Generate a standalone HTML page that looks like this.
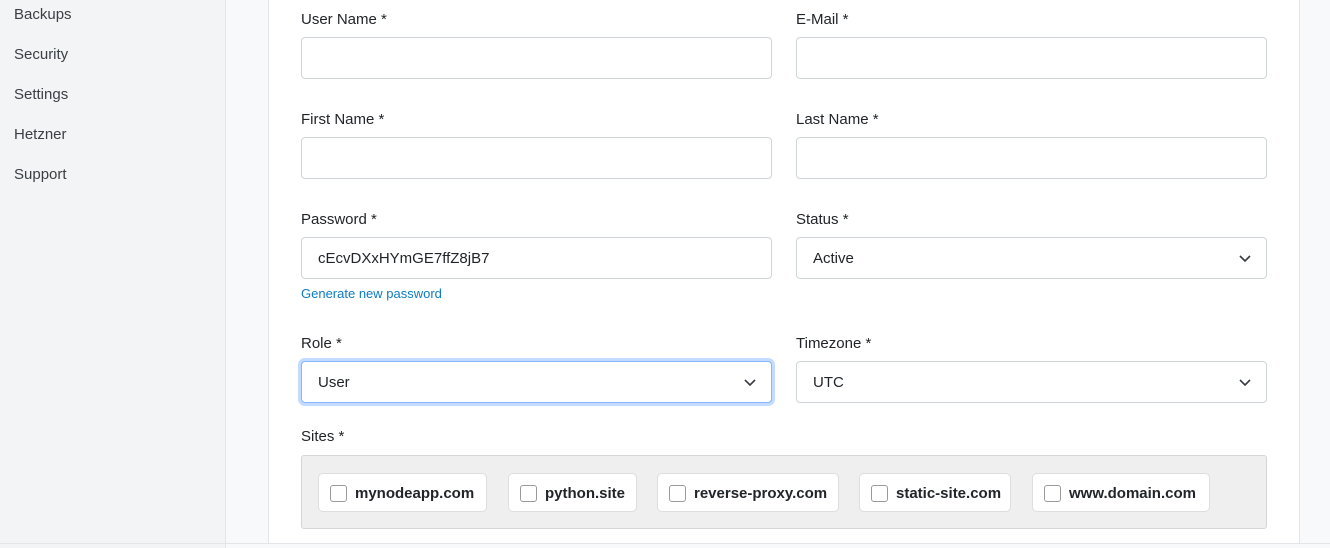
<!DOCTYPE html>
<html><head><style>
*{box-sizing:border-box;margin:0;padding:0}
body{width:1330px;height:548px;overflow:hidden;background:#f8f9fa;font-family:"Liberation Sans",sans-serif;color:#212529;position:relative}
.side{position:absolute;left:0;top:0;width:226px;height:548px;background:#f3f4f6;border-right:1px solid #e3e5e8}
.side div{position:absolute;left:14px;font-size:15px;color:#3a3f44}
.card{position:absolute;left:268px;top:-5px;width:1032px;height:549px;background:#fff;border:1px solid #e3e5e8;border-top:none}
.bl{position:absolute;left:0;top:543px;width:1330px;height:1px;background:#e3e5e8}
.lb{position:absolute;font-size:15px;color:#212529}
.in{position:absolute;width:471px;height:42px;border:1px solid #ced4da;border-radius:4px;background:#fff;font-size:15px;padding:12px 16px}
.chev{position:absolute;right:14px;top:13px}
.sites{position:absolute;left:301px;top:455px;width:966px;height:74px;background:#efefef;border:1px solid #d6d6d6;border-radius:3px}
.chip{position:absolute;top:17px;height:39px;background:#fff;border:1px solid #dedede;border-radius:5px;font-size:15px;font-weight:bold;padding:11px 0 0 36px;white-space:nowrap}
.chip:before{content:"";position:absolute;left:11px;top:11px;width:15px;height:15px;border:1px solid #9a9a9a;border-radius:3px}
</style></head><body>
<div class="side">
<div style="top:6px">Backups</div><div style="top:46px">Security</div><div style="top:86px">Settings</div><div style="top:126px">Hetzner</div><div style="top:166px">Support</div>
</div>
<div class="card"></div>
<div class="bl"></div>
<div class="lb" style="left:301px;top:11px">User Name *</div>
<div class="lb" style="left:796px;top:11px">E-Mail *</div>
<div class="in" style="left:301px;top:37px"></div>
<div class="in" style="left:796px;top:37px"></div>
<div class="lb" style="left:301px;top:111px">First Name *</div>
<div class="lb" style="left:796px;top:111px">Last Name *</div>
<div class="in" style="left:301px;top:137px"></div>
<div class="in" style="left:796px;top:137px"></div>
<div class="lb" style="left:301px;top:211px">Password *</div>
<div class="lb" style="left:796px;top:211px">Status *</div>
<div class="in" style="left:301px;top:237px">cEcvDXxHYmGE7ffZ8jB7</div>
<div class="in" style="left:796px;top:237px">Active<svg class="chev" width="14" height="14" viewBox="0 0 14 14"><path d="M2 5l5 5 5-5" fill="none" stroke="#343a40" stroke-width="1.6"/></svg></div>
<div class="lb" style="left:301px;top:286px;font-size:13px;color:#0d7cc1">Generate new password</div>
<div class="lb" style="left:301px;top:335px">Role *</div>
<div class="lb" style="left:796px;top:335px">Timezone *</div>
<div class="in" style="left:301px;top:361px;border-color:#86b7fe;box-shadow:0 0 0 3px rgba(13,110,253,.25)">User<svg class="chev" width="14" height="14" viewBox="0 0 14 14"><path d="M2 5l5 5 5-5" fill="none" stroke="#343a40" stroke-width="1.6"/></svg></div>
<div class="in" style="left:796px;top:361px">UTC<svg class="chev" width="14" height="14" viewBox="0 0 14 14"><path d="M2 5l5 5 5-5" fill="none" stroke="#343a40" stroke-width="1.6"/></svg></div>
<div class="lb" style="left:301px;top:428px">Sites *</div>
<div class="sites">
<div class="chip" style="left:16px;width:169px">mynodeapp.com</div>
<div class="chip" style="left:206px;width:129px">python.site</div>
<div class="chip" style="left:355px;width:182px">reverse-proxy.com</div>
<div class="chip" style="left:557px;width:152px">static-site.com</div>
<div class="chip" style="left:730px;width:178px">www.domain.com</div>
</div>
</body></html>
